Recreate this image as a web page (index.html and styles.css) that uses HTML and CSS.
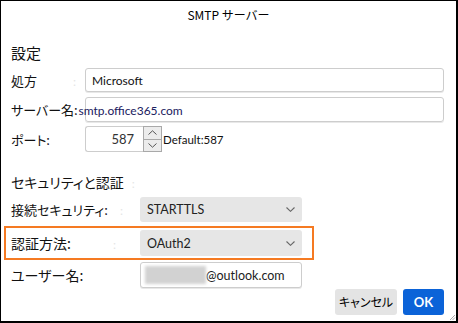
FILE: index.html
```html
<!DOCTYPE html>
<html lang="ja">
<head>
<meta charset="utf-8">
<title>SMTP サーバー</title>
<link rel="stylesheet" href="styles.css">
</head>
<body>
<div class="dialog">
  <div class="title">SMTP サーバー</div>
  <div class="content">
    <div class="heading h1">設定</div>

    <div class="row r1">
      <div class="label lw1">処方<span class="ghost">:</span></div>
      <div class="field wide"><span class="val">Microsoft</span></div>
    </div>

    <div class="row r2">
      <div class="label lw1 over">サーバー名: <span class="server">smtp.office365.com</span></div>
      <div class="field wide clear"></div>
    </div>

    <div class="row r3">
      <div class="label lw1">ポート:</div>
      <div class="spin">
        <div class="spin-val">587</div>
        <div class="spin-btns">
          <div class="spin-btn"><svg width="9" height="5" viewBox="0 0 9 5"><path d="M0.5 4.5 L4.5 0.8 L8.5 4.5" fill="none" stroke="#555" stroke-width="1"/></svg></div>
          <div class="spin-btn"><svg width="9" height="5" viewBox="0 0 9 5"><path d="M0.5 0.5 L4.5 4.2 L8.5 0.5" fill="none" stroke="#555" stroke-width="1"/></svg></div>
        </div>
      </div>
      <div class="default">Default:587</div>
    </div>

    <div class="heading h2">セキュリティと認証<span class="ghost g2">:</span></div>

    <div class="row r4">
      <div class="label lw2">接続セキュリティ:<span class="ghost g3">:</span></div>
      <div class="select"><span class="val">STARTTLS</span><svg class="chev" width="9" height="5" viewBox="0 0 9 5"><path d="M0.5 0.5 L4.5 4.3 L8.5 0.5" fill="none" stroke="#666" stroke-width="1.1"/></svg></div>
    </div>

    <div class="row r5 highlight">
      <div class="label lw2 big">認証方法:<span class="ghost g4">:</span></div>
      <div class="select"><span class="val">OAuth2</span><svg class="chev" width="9" height="5" viewBox="0 0 9 5"><path d="M0.5 0.5 L4.5 4.3 L8.5 0.5" fill="none" stroke="#666" stroke-width="1.1"/></svg></div>
    </div>

    <div class="row r6">
      <div class="label lw2 big">ユーザー名:</div>
      <div class="field narrow"><span class="blur"></span><span class="mail">@outlook.com</span></div>
    </div>

    <div class="buttons">
      <div class="btn cancel">キャンセル</div>
      <div class="btn ok">OK</div>
    </div>
  </div>
  <svg class="grip" width="7" height="7" viewBox="0 0 7 7"><path d="M6 1 L1 6 M6 3.5 L3.5 6" stroke="#aaa" stroke-width="1"/></svg>
</div>
</body>
</html>
```

FILE: styles.css
```css
* { box-sizing: border-box; }
html, body { margin: 0; padding: 0; background: #fff; }
body {
  font-family: Lato, "Noto Sans CJK JP", sans-serif;
  color: #111;
}
.dialog {
  position: relative;
  width: 458px;
  height: 323px;
  border: 1px solid #000;
  border-right-width: 2px;
  border-bottom-width: 2px;
  background: #fff;
}
.title {
  height: 27px;
  line-height: 27px;
  text-align: center;
  font-family: "Noto Sans CJK JP", sans-serif;
  font-size: 12px;
  color: #000;
}
.content {
  padding: 0 12px 0 10px;
  display: flex;
  flex-direction: column;
}
.heading {
  font-family: "Noto Sans CJK JP", sans-serif;
  font-feature-settings: "palt";
  color: #111;
  height: 24px;
  line-height: 24px;
  white-space: nowrap;
}
.h1 { margin-top: 13px; font-size: 15px; }
.h2 { margin-top: 18px; font-size: 14px; }
.row {
  display: flex;
  align-items: center;
}
.label {
  font-family: "Noto Sans CJK JP", sans-serif;
  font-feature-settings: "palt";
  font-size: 13px;
  color: #111;
  white-space: nowrap;
  flex: none;
}
.label.big { font-size: 14px; }
.lw1 { width: 74px; }
.lw2 { width: 129px; }
.ghost { color: #e4e4e4; font-size: 11px; }
.r1 .ghost { margin-left: 36px; }
.g2 { margin-left: 8px; }
.g3 { margin-left: 12px; }
.g4 { margin-left: 42px; }
.over { position: relative; z-index: 1; }
.server {
  font-family: Lato, sans-serif;
  font-size: 12px;
  color: #1a2060;
  margin-left: -2px;
}
.r1 { margin-top: 3px; height: 24px; }
.r2 { margin-top: 5px; height: 25px; }
.r3 { margin-top: 4px; height: 26px; }
.r4 { margin-top: 3px; height: 25px; }
.r5 { margin-top: 4px; }
.r6 { margin-top: 2px; height: 26px; }

.field {
  height: 100%;
  border: 1px solid #cdcdcd;
  border-radius: 3px;
  background: #fff;
  box-shadow: 0 1px 0 #e8e8e8;
  display: flex;
  align-items: center;
  font-size: 12px;
  color: #111;
}
.field.wide { width: 359px; padding-left: 6px; }
.field.clear { background: transparent; }
.field.narrow { width: 162px; padding-left: 4px; }
.val { white-space: nowrap; }
.blur {
  display: block;
  width: 61px;
  height: 18px;
  background: #d2d2d2;
  filter: blur(1.5px);
}
.mail { font-size: 12.5px; color: #222; }

.spin {
  display: flex;
  height: 26px;
}
.spin-val {
  width: 58px;
  height: 26px;
  border: 1px solid #cdcdcd;
  border-right: none;
  border-radius: 3px 0 0 3px;
  text-align: right;
  padding-right: 9px;
  line-height: 24px;
  font-size: 13px;
  color: #333;
}
.spin-btns {
  display: flex;
  flex-direction: column;
  width: 19px;
  border: 1px solid #a9a9a9;
  background: #ececec;
}
.spin-btn {
  flex: 1;
  display: flex;
  align-items: center;
  justify-content: center;
}
.spin-btn + .spin-btn { border-top: 1px solid #a9a9a9; }
.default {
  margin-left: 1px;
  font-size: 11.5px;
  color: #111;
}

.select {
  width: 162px;
  height: 100%;
  background: #e6e6e6;
  border-radius: 3px;
  display: flex;
  align-items: center;
  justify-content: space-between;
  padding: 0 7px 0 7px;
  font-size: 12.5px;
  color: #222;
}
.highlight {
  margin-left: -7px;
  width: 310px;
  height: 34px;
  border: 2px solid #f57a22;
  padding: 2px 0 2px 5px;
}

.buttons {
  margin-top: 1px;
  display: flex;
  justify-content: flex-end;
  gap: 6px;
}
.btn {
  height: 26px;
  line-height: 26px;
  border-radius: 3px;
  text-align: center;
  font-size: 12px;
}
.cancel {
  width: 62px;
  background: #e4e4e4;
  color: #000;
  font-family: "Noto Sans CJK JP", sans-serif;
  font-feature-settings: "palt";
}
.ok {
  width: 41px;
  background: #0b63d8;
  color: #fff;
  font-weight: bold;
  font-size: 13px;
}
.grip { position: absolute; right: 0; bottom: 0; }
```
